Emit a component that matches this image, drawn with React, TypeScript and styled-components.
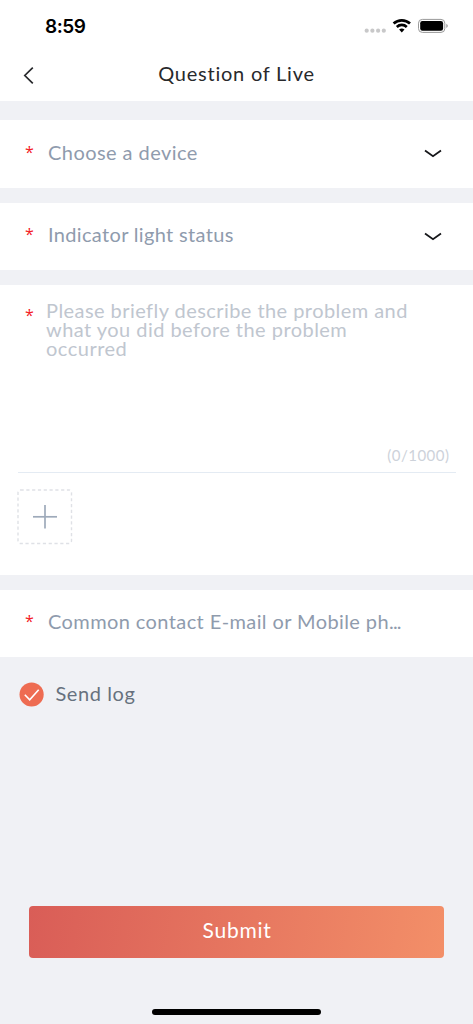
import React from "react";
import styled, { createGlobalStyle } from "styled-components";

const GlobalStyle = createGlobalStyle`
  * { box-sizing: border-box; }
  body { margin: 0; background: #f0f1f5; font-family: Lato, sans-serif; }
`;

const Screen = styled.main`
  width: 473px;
  height: 1024px;
  display: flex;
  flex-direction: column;
  background: #f0f1f5;
  overflow: hidden;
`;

const Text = styled.span<{ $spacing?: number }>`
  letter-spacing: ${(p) => p.$spacing ?? 0}px;
  white-space: nowrap;
`;

const StatusBar = styled.div`
  height: 51px;
  flex: none;
  display: flex;
  justify-content: space-between;
  padding: 0 24px 0 45px;
  background: #fff;
`;

const Clock = styled.span`
  font: 600 19px/24px Inter, sans-serif;
  letter-spacing: -0.45px;
  color: #000;
  padding-top: 15px;
`;

const StatusIcons = styled.svg`
  width: 86px;
  height: 24px;
  margin-top: 14px;
`;

const Header = styled.header`
  height: 50px;
  flex: none;
  display: grid;
  grid-template-columns: 60px 1fr 60px;
  background: #fff;
  color: #28292c;
  font-size: 20px;
  line-height: 24px;
  text-align: center;
`;

const BackButton = styled.button`
  border: 0;
  background: none;
  padding: 15px 0 0 22px;
  display: flex;
  align-items: flex-start;
`;

const Title = styled.h1`
  margin: 0;
  padding-top: 10px;
  font: inherit;
`;

const Form = styled.form`
  padding-top: 19px;
  flex: 1;
  display: flex;
  flex-direction: column;
`;

const Fields = styled.div`
  display: flex;
  flex-direction: column;
  gap: 15px;
`;

const Row = styled.div<{ $compact?: boolean }>`
  height: ${(p) => (p.$compact ? 67 : 67.5)}px;
  display: flex;
  align-items: flex-start;
  padding: ${(p) => (p.$compact ? 19 : 19.5)}px 31.5px 0 25px;
  background: #fff;
  color: #8f9bad;
  font-size: 20px;
  line-height: 24px;
`;

const Required = styled.span<{ $drop?: number }>`
  width: 23px;
  flex: none;
  padding-top: ${(p) => p.$drop ?? 0}px;
  font: 16px/24px "Open Sans", sans-serif;
  color: #f32025;
`;

const Chevron = styled.svg`
  width: 18px;
  height: 10px;
  margin: 9.5px 0 0 auto;
`;

const Panel = styled.section`
  height: 290px;
  padding: 16px 17.5px 0 18px;
  background: #fff;
`;

const Description = styled.div`
  height: 140px;
  display: flex;
  padding-left: 7px;
`;

const Placeholder = styled.div`
  display: flex;
  flex-direction: column;
  margin-left: -2px;
  font-size: 20px;
  line-height: 19px;
  color: #c0c6cf;
`;

const Counter = styled.div`
  height: 32px;
  padding: 4px 6px 0 0;
  border-bottom: 1px solid #e4ebf3;
  text-align: right;
  font-size: 15px;
  line-height: 20px;
  color: #cdd2da;
`;

const AddButton = styled.button`
  display: block;
  margin: 16px 0 0 -1px;
  width: 56px;
  height: 56px;
  padding: 0;
  border: 0;
  background: none;
`;

const LogOption = styled.label`
  display: flex;
  gap: 11.4px;
  padding: 25px 19px;
  font-size: 20px;
  line-height: 22px;
  color: #67717e;
`;

const Footer = styled.footer`
  margin-top: auto;
  padding: 0 29px 9px;
  display: flex;
  flex-direction: column;
  align-items: center;
  gap: 51.5px;
`;

const SubmitButton = styled.button`
  width: 415.5px;
  height: 51.5px;
  border: 0;
  border-radius: 4px;
  padding: 0 0 3px 1px;
  background: linear-gradient(100deg, #d95d57, #f38f68);
  color: #fff;
  font: 21px/24px Lato, sans-serif;
`;

const HomeIndicator = styled.div`
  width: 169px;
  height: 6px;
  border-radius: 3px;
  background: #000;
`;

function DownIcon() {
  return (
    <Chevron viewBox="0 0 18 10" fill="none">
      <path d="M1 1.5 9 7.2 17 1.5" stroke="#16171a" strokeWidth="1.8" />
    </Chevron>
  );
}

export default function App() {
  return (
    <Screen>
      <GlobalStyle />
      <StatusBar>
        <Clock>8:59</Clock>
        <StatusIcons viewBox="0 0 86 24">
          <g fill="#c8c8c9">
            <circle cx="3.7" cy="16.7" r="2.1" />
            <circle cx="9.4" cy="16.7" r="2.1" />
            <circle cx="15.1" cy="16.7" r="2.1" />
            <circle cx="20.8" cy="16.7" r="2.1" />
          </g>
          <g fill="none" stroke="#000" strokeWidth="2.7">
            <path d="M30.6 9.5a12.1 12.1 0 0 1 16.4 0" />
            <path d="M33.8 12.9a7.4 7.4 0 0 1 10 0" />
          </g>
          <path d="M36.1 15.5a4.3 4.3 0 0 1 5.4 0L38.8 18.4Z" fill="#000" />
          <rect x="55.5" y="5.4" width="26.3" height="13" rx="3.8" fill="none" stroke="#999" strokeWidth="1" />
          <rect x="57.2" y="7.1" width="22.9" height="9.6" rx="2.2" fill="#000" />
          <path d="M83.3 9.8v4.2c2-.8 2-3.4 0-4.2Z" fill="#999" />
        </StatusIcons>
      </StatusBar>
      <Header>
        <BackButton aria-label="Back">
          <svg width="13" height="19" viewBox="0 0 13 19" fill="none">
            <path d="M10.8 1.7 2.8 9.5 10.8 17.3" stroke="#28292c" strokeWidth="1.7" />
          </svg>
        </BackButton>
        <Title><Text $spacing={0.76}>Question of Live</Text></Title>
      </Header>
      <Form>
        <Fields>
          <Row>
            <Required>*</Required>
            <Text $spacing={0.44}>Choose a device</Text>
            <DownIcon />
          </Row>
          <Row>
            <Required>*</Required>
            <Text $spacing={0.34}>Indicator light status</Text>
            <DownIcon />
          </Row>
          <Panel>
            <Description>
              <Required $drop={2}>*</Required>
              <Placeholder>
                <Text $spacing={0.44}>Please briefly describe the problem and</Text>
                <Text $spacing={0.46}>what you did before the problem</Text>
                <Text $spacing={0.5}>occurred</Text>
              </Placeholder>
            </Description>
            <Counter><Text $spacing={0.5}>(0/1000)</Text></Counter>
            <AddButton type="button" aria-label="Add picture">
              <svg width="56" height="56" viewBox="0 0 56 56" fill="none">
                <rect x="1" y="1" width="53.5" height="53.5" rx="2.5" stroke="#dfe1e6" strokeWidth="1.4" strokeDasharray="3.2 2.6" />
                <path d="M16 27.8H40" stroke="#9eaaba" strokeWidth="1.7" />
                <path d="M28 16V39.6" stroke="#9eaaba" strokeWidth="1.7" />
              </svg>
            </AddButton>
          </Panel>
          <Row $compact>
            <Required>*</Required>
            <Text $spacing={0.4}>Common contact E-mail or Mobile ph</Text>
            <Text $spacing={-0.8}>...</Text>
          </Row>
        </Fields>
        <LogOption>
          <svg width="25" height="25" viewBox="0 0 25 25" fill="none">
            <circle cx="12.6" cy="12.5" r="12.1" fill="#ee6c52" />
            <path d="M5.8 12.8 10.7 17.8 19.7 7.8" stroke="#fff" strokeWidth="1.6" />
          </svg>
          <Text $spacing={0.6}>Send log</Text>
        </LogOption>
        <Footer>
          <SubmitButton type="button"><Text $spacing={0.75}>Submit</Text></SubmitButton>
          <HomeIndicator />
        </Footer>
      </Form>
    </Screen>
  );
}
